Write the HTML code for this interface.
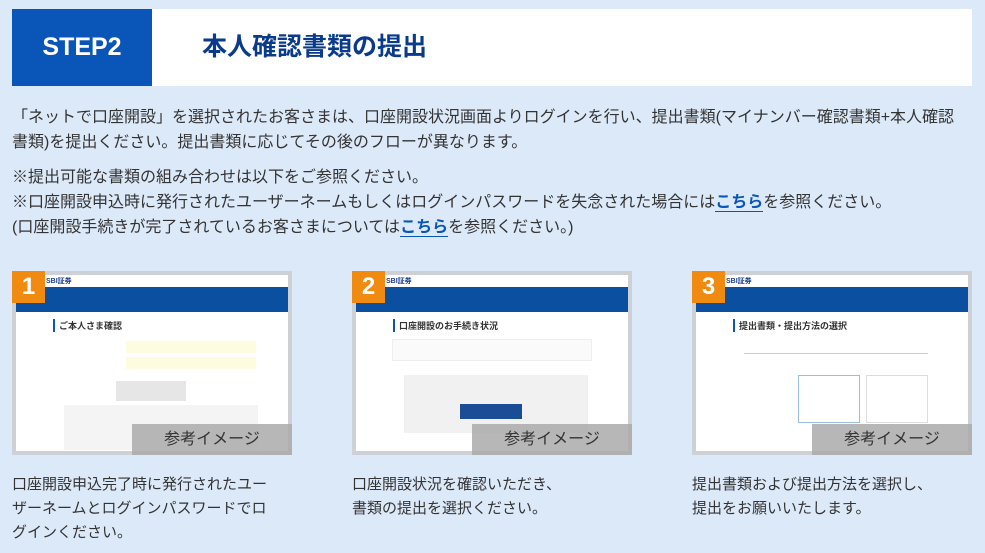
<!DOCTYPE html>
<html><head><meta charset="utf-8"><style>
*{margin:0;padding:0;box-sizing:border-box}
body{width:985px;height:553px;background:#dce9f8;font-family:"Liberation Sans","Noto Sans CJK JP",sans-serif;color:#333;position:relative;overflow:hidden}
.hd{position:absolute;left:12px;top:9px;width:960px;height:77px;background:#fff}
.step{position:absolute;left:0;top:0;width:140px;height:77px;background:#0a56b8;color:#fff;font-weight:bold;font-size:25px;text-align:center;line-height:77px}
.ttl{position:absolute;left:190px;top:0;line-height:77px;font-size:25px;font-weight:bold;color:#0a3a8a}
.p{position:absolute;left:12px;font-size:16px;line-height:25px;white-space:nowrap}
a{color:#0a56b8;font-weight:bold;text-decoration:none;border-bottom:1px solid #0a56b8}
.card{position:absolute;top:271px;width:280px;height:184px;background:#cdd1d6;padding:4px}
.in{position:absolute;left:4px;top:4px;right:4px;bottom:4px;background:#fff;overflow:hidden}
.bar{position:absolute;left:0;right:0;top:12px;height:25px;background:#0b4fa0}
.logo{position:absolute;left:30px;top:1px;font-size:7px;font-weight:bold;color:#1a3d8a}
.num{position:absolute;left:0;top:0;width:33px;height:32px;background:#f08a10;color:#fff;font-weight:bold;font-size:24px;text-align:center;line-height:32px}
.lab{position:absolute;right:0;bottom:0;width:160px;height:31px;background:rgba(170,170,170,.85);color:#333;font-size:16px;text-align:center;line-height:31px}
.h{position:absolute;left:37px;top:44px;font-size:9px;font-weight:bold;border-left:2px solid #0a56b8;padding-left:4px}
.g{position:absolute;background:#eee}
.d{position:absolute;top:473px;font-size:15px;line-height:24px}
</style></head><body>
<div class="hd"><div class="step">STEP2</div><div class="ttl">本人確認書類の提出</div></div>
<div class="p" style="top:105px">「ネットで口座開設」を選択されたお客さまは、口座開設状況画面よりログインを行い、提出書類(マイナンバー確認書類+本人確認</div>
<div class="p" style="top:130px">書類)を提出ください。提出書類に応じてその後のフローが異なります。</div>
<div class="p" style="top:165px">※提出可能な書類の組み合わせは以下をご参照ください。</div>
<div class="p" style="top:190px">※口座開設申込時に発行されたユーザーネームもしくはログインパスワードを失念された場合には<a>こちら</a>を参照ください。</div>
<div class="p" style="top:215px">(口座開設手続きが完了されているお客さまについては<a>こちら</a>を参照ください。)</div>

<div class="card" style="left:12px"><div class="in"><div class="logo">SBI証券</div><div class="bar"></div><div class="h">ご本人さま確認</div>
<div class="g" style="left:110px;top:66px;width:130px;height:12px;background:#fdfbe0"></div>
<div class="g" style="left:110px;top:82px;width:130px;height:12px;background:#fdfbe0"></div>
<div class="g" style="left:100px;top:106px;width:70px;height:20px;background:#e6e6e6"></div>
<div class="g" style="left:48px;top:130px;width:194px;height:45px;background:#f4f4f4"></div>
</div><div class="num">1</div><div class="lab">参考イメージ</div></div>

<div class="card" style="left:352px"><div class="in"><div class="logo">SBI証券</div><div class="bar"></div><div class="h">口座開設のお手続き状況</div>
<div class="g" style="left:36px;top:64px;width:200px;height:22px;background:#fafafa;border:1px solid #eee"></div>
<div class="g" style="left:48px;top:100px;width:184px;height:58px;background:#f1f1f1"></div>
<div class="g" style="left:104px;top:129px;width:62px;height:15px;background:#1a4d96"></div>
</div><div class="num">2</div><div class="lab">参考イメージ</div></div>

<div class="card" style="left:692px"><div class="in"><div class="logo">SBI証券</div><div class="bar"></div><div class="h">提出書類・提出方法の選択</div>
<div class="g" style="left:48px;top:78px;width:184px;height:1px;background:#ccd"></div>
<div class="g" style="left:102px;top:100px;width:62px;height:48px;background:#fff;border:1px solid #9bbbe0"></div>
<div class="g" style="left:170px;top:100px;width:62px;height:48px;background:#fff;border:1px solid #ddd"></div>
</div><div class="num">3</div><div class="lab">参考イメージ</div></div>

<div class="d" style="left:12px">口座開設申込完了時に発行されたユー<br>ザーネームとログインパスワードでロ<br>グインください。</div>
<div class="d" style="left:352px">口座開設状況を確認いただき、<br>書類の提出を選択ください。</div>
<div class="d" style="left:692px">提出書類および提出方法を選択し、<br>提出をお願いいたします。</div>
</body></html>
